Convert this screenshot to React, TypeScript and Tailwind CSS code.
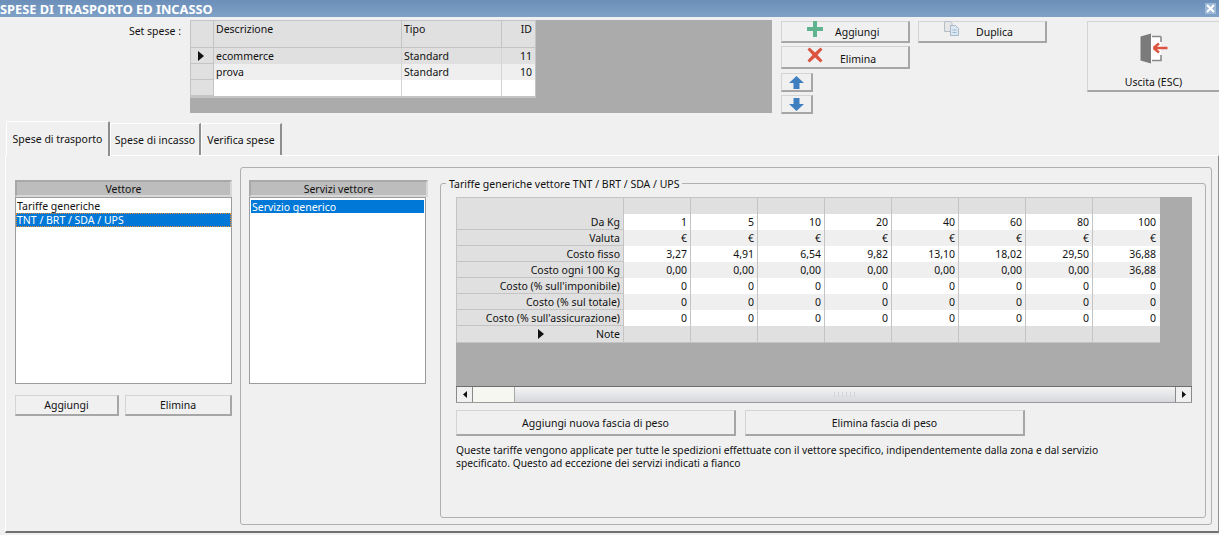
const BTN =
  "flex items-center justify-center border border-[#d4d4d4] border-r-2 border-b-2 border-r-[#a6a6a6] border-b-[#a6a6a6] bg-[#f0f0f0]";

const WEIGHTS = ["1", "5", "10", "20", "40", "60", "80", "100"];
const RATES: { label: string; values: string[] }[] = [
  { label: "Da Kg", values: WEIGHTS },
  { label: "Valuta", values: WEIGHTS.map(() => "€") },
  { label: "Costo fisso", values: ["3,27", "4,91", "6,54", "9,82", "13,10", "18,02", "29,50", "36,88"] },
  { label: "Costo ogni 100 Kg", values: ["0,00", "0,00", "0,00", "0,00", "0,00", "0,00", "0,00", "36,88"] },
  { label: "Costo (% sull'imponibile)", values: WEIGHTS.map(() => "0") },
  { label: "Costo (% sul totale)", values: WEIGHTS.map(() => "0") },
  { label: "Costo (% sull'assicurazione)", values: WEIGHTS.map(() => "0") },
];

function RowMarker() {
  return (
    <svg width="6" height="10" viewBox="0 0 6 10">
      <path d="M0 0 L6 5 L0 10 Z" fill="#111" />
    </svg>
  );
}

function SetGrid() {
  const rows = [
    { d: "ecommerce", t: "Standard", id: "11", bg: "bg-[#e0e0e0]", marker: true },
    { d: "prova", t: "Standard", id: "10", bg: "bg-[#efefef]", marker: false },
    { d: "", t: "", id: "", bg: "bg-white", marker: false },
  ];
  return (
    <div className="ml-[9px] mt-[3px] h-[93px] w-[582px] bg-[#ababab]">
      <div className="w-[346px] border border-[#c4c4c4] border-b-2">
        <div className="flex h-[27px] border-b border-[#c4c4c4] bg-[#e0e0e0]">
          <div className="w-[23px] border-r border-[#c4c4c4]" />
          <div className="w-[188px] border-r border-[#c4c4c4] pl-[2px] leading-[16px]">Descrizione</div>
          <div className="w-[100px] border-r border-[#c4c4c4] pl-[2px] leading-[16px]">Tipo</div>
          <div className="flex-1 pr-[3px] text-right leading-[16px]">ID</div>
        </div>
        {rows.map((r) => (
          <div key={r.id || "new"} className={`flex h-[16px] leading-[16px] ${r.bg}`}>
            <div className="flex w-[23px] items-center justify-center border-r border-b border-[#c4c4c4] bg-[#e0e0e0] pr-[2px]">
              {r.marker && <RowMarker />}
            </div>
            <div className="w-[188px] border-r border-[#d4d4d4] pl-[2px]">{r.d}</div>
            <div className="w-[100px] border-r border-[#d4d4d4] pl-[2px]">{r.t}</div>
            <div className="flex-1 pr-[3px] text-right">{r.id}</div>
          </div>
        ))}
      </div>
    </div>
  );
}

function PlusIcon() {
  return (
    <svg width="16" height="16" viewBox="0 0 16 16">
      <path d="M6 0 H10 V6 H16 V10 H10 V16 H6 V10 H0 V6 H6 Z" fill="#5fb48f" />
    </svg>
  );
}

function CrossIcon() {
  return (
    <svg width="16" height="16" viewBox="0 0 16 16">
      <path d="M2.5 0.5 L8 5.5 L13.5 0.5 L15.5 2.5 L10.5 8 L15.5 13.5 L13.5 15.5 L8 10.5 L2.5 15.5 L0.5 13.5 L5.5 8 L0.5 2.5 Z" fill="#dc5440" />
    </svg>
  );
}

function CopyIcon() {
  return (
    <svg width="15" height="15" viewBox="0 0 15 15">
      <path d="M0.5 0.5 H6 L8 2.5 V10.5 H0.5 Z" fill="#e6e6e6" stroke="#b4bcc6" />
      <path d="M6.5 4.5 H11.5 L14.5 7.5 V14.5 H6.5 Z" fill="#dbe7f3" stroke="#a9b8c8" />
      <path d="M8.5 9 H12.5 M8.5 11.5 H12.5" stroke="#9db9d6" />
    </svg>
  );
}

function ExitIcon() {
  return (
    <svg width="28" height="31" viewBox="0 0 28 31">
      <rect x="11" y="3" width="10" height="25" fill="#ffffff" />
      <path d="M21 3.5 H12 M21 3.5 V9 M21 22 V27.5 H12" fill="none" stroke="#8a8a8a" strokeWidth="1.6" />
      <path d="M0.5 3.5 L11 0.5 V30.5 L0.5 27.5 Z" fill="#7b7b7b" />
      <path d="M27.5 15 H14 M13.5 15 L19 10.5 M13.5 15 L19 19.5" fill="none" stroke="#dc5440" strokeWidth="2.4" />
    </svg>
  );
}

function ArrowIcon({ down }: { down?: boolean }) {
  return (
    <svg width="15" height="13" viewBox="0 0 15 13">
      <path
        d={down ? "M4.5 0 H10.5 V6 H15 L7.5 13 L0 6 H4.5 Z" : "M7.5 0 L15 7 H10.5 V13 H4.5 V7 H0 Z"}
        fill="#3f7fbf"
      />
    </svg>
  );
}

function TopActions() {
  return (
    <>
      <div className="ml-[9px] mt-[4px] flex w-[129px] flex-col">
        <div className={`${BTN} h-[22px] justify-start pl-[25px]`}>
          <span className="-mt-[6px] mr-[12px]"><PlusIcon /></span>
          <span>Aggiungi</span>
        </div>
        <div className={`${BTN} mt-[3px] h-[23px] justify-start pl-[25px]`}>
          <span className="-mt-[5px] mr-[17px]"><CrossIcon /></span>
          <span className="pt-[3px]">Elimina</span>
        </div>
        <div className={`${BTN} mt-[4px] h-[19px] w-[32px]`}><ArrowIcon /></div>
        <div className={`${BTN} mt-[3px] h-[19px] w-[32px]`}><ArrowIcon down /></div>
      </div>
      <div className={`${BTN} ml-[8px] mt-[4px] h-[22px] w-[129px] justify-start pl-[25px]`}>
        <span className="-mt-[7px] mr-[17px]"><CopyIcon /></span>
        <span>Duplica</span>
      </div>
      <div className="ml-[40px] mt-[4px] flex h-[71px] w-[132px] flex-col items-center border-t border-l border-[#d4d4d4] border-b-2 border-b-[#a6a6a6] pt-[11px]">
        <ExitIcon />
        <div className="mt-[11px]">Uscita (ESC)</div>
      </div>
    </>
  );
}

function Tabs() {
  return (
    <div className="flex h-[34px] items-end pl-[6px]">
      <div className="relative z-10 -mb-px flex h-[35px] w-[104px] items-center justify-center rounded-t-[2px] border-t border-l border-white border-r-2 border-r-[#8e8e8e] bg-[#f0f0f0]">
        Spese di trasporto
      </div>
      <div className="flex h-[32px] w-[91px] items-center justify-center border-r-2 border-r-[#8e8e8e] border-t border-t-white border-l border-l-white">
        Spese di incasso
      </div>
      <div className="flex h-[32px] w-[81px] items-center justify-center border-r-2 border-r-[#8e8e8e] border-t border-t-white border-l border-l-white">
        Verifica spese
      </div>
    </div>
  );
}

function ListPanel({ title, width, children }: { title: string; width: string; children: React.ReactNode }) {
  return (
    <div className={width}>
      <div className="flex h-[17px] items-center justify-center border-2 border-[#a8a8a8] border-b-[#d8d8d8] border-r-[#d8d8d8] bg-[#bdbdbd]">
        {title}
      </div>
      {children}
    </div>
  );
}

function Rates() {
  const cols = [0, 1, 2, 3, 4, 5, 6, 7];
  return (
    <div className="h-[206px] w-[736px] bg-[#ababab]">
      <div className="w-[704px] border-t border-l border-[#c4c4c4]">
        <div className="flex h-[16px] bg-[#e0e0e0]">
          <div className="w-[166px]" />
          {cols.map((c) => (
            <div key={c} className="w-[67px] border-l border-[#c4c4c4]" />
          ))}
        </div>
        {RATES.map((row, i) => (
          <div key={row.label} className={`flex h-[16px] leading-[16px] ${i % 2 ? "bg-[#efefef]" : "bg-white"}`}>
            <div className="w-[166px] border-b border-[#c4c4c4] bg-[#e0e0e0] pr-[3px] text-right">{row.label}</div>
            {row.values.map((v, c) => (
              <div key={c} className="w-[67px] border-l border-[#c4c4c4] pr-[3px] text-right">{v}</div>
            ))}
          </div>
        ))}
        <div className="flex h-[17px] border-b border-[#c4c4c4] bg-[#e0e0e0] leading-[16px]">
          <div className="flex w-[166px] items-center pr-[3px]">
            <span className="ml-[81px]"><RowMarker /></span>
            <span className="ml-auto">Note</span>
          </div>
          {cols.map((c) => (
            <div key={c} className="w-[67px] border-l border-[#c4c4c4]" />
          ))}
        </div>
      </div>
      <div className="mt-[43px] flex h-[17px] items-center border-t border-[#6e6e6e] border-b border-b-[#9a9a9a] bg-gradient-to-b from-[#f4f4f4] to-[#d6d8dc]">
        <div className="flex h-full w-[17px] items-center justify-center border-x border-[#8a8a8a] bg-[#f0f0f0]">
          <svg width="4" height="7" viewBox="0 0 4 7"><path d="M4 0 L0 3.5 L4 7 Z" fill="#111" /></svg>
        </div>
        <div className="h-full w-[42px] border-r border-[#a8a8a8] bg-[#f7f7f2]" />
        <div className="flex flex-1 items-center justify-center">
          <svg width="23" height="5" viewBox="0 0 23 5">
            <path d="M0 1 H23 M0 4 H23" stroke="#b6b6b6" strokeDasharray="1 3" />
          </svg>
        </div>
        <div className="flex h-full w-[17px] items-center justify-center border-x border-[#8a8a8a] bg-[#f0f0f0]">
          <svg width="4" height="7" viewBox="0 0 4 7"><path d="M0 0 L4 3.5 L0 7 Z" fill="#111" /></svg>
        </div>
      </div>
    </div>
  );
}

export default function App() {
  return (
    <div className="h-[535px] w-[1219px] overflow-hidden bg-[#f0f0f0] font-['Noto_Sans','Liberation_Sans',sans-serif] text-[10.5px] leading-[14px] text-[#111]">
      <div className="flex h-[17px] items-center justify-between bg-gradient-to-b from-[#6b8fb9] to-[#7fa1c8] pr-[3px] text-[12.8px] font-bold text-white">
        <span>SPESE DI TRASPORTO ED INCASSO</span>
        <span className="flex h-[11px] w-[11px] items-center justify-center bg-[#9db8d6]">
          <svg width="9" height="9" viewBox="0 0 9 9">
            <path d="M1 1 L8 8 M8 1 L1 8" stroke="#fff" strokeWidth="2" />
          </svg>
        </span>
      </div>

      <div className="flex h-[104px]">
        <div className="w-[181px] pt-[7px] text-right">Set spese :</div>
        <SetGrid />
        <TopActions />
      </div>

      <Tabs />

      <div className="ml-[5px] flex h-[378px] border-t border-l border-white border-r border-r-[#8e8e8e] border-b-2 border-b-[#707070] pl-[9px] pt-[11px]">
        <ListPanel title="Vettore" width="mt-[13px] w-[217px]">
          <div className="h-[187px] border border-[#9c9c9c] bg-white pt-px">
            <div className="pl-px leading-[14px]">Tariffe generiche</div>
            <div className="h-[14px] border border-dotted border-[#f08a24] bg-[#0078d7] leading-[12px] text-white">
              TNT / BRT / SDA / UPS
            </div>
          </div>
          <div className="mt-[11px] flex justify-between">
            <div className={`${BTN} h-[21px] w-[104px]`}>Aggiungi</div>
            <div className={`${BTN} h-[21px] w-[107px]`}>Elimina</div>
          </div>
        </ListPanel>

        <div className="ml-[8px] flex h-[358px] w-[972px] rounded-[3px] border border-[#b0b0b0] pl-[8px] pt-[12px]">
          <ListPanel title="Servizi vettore" width="w-[179px]">
            <div className="h-[187px] w-[177px] border border-[#9c9c9c] bg-white p-px pt-[2px]">
              <div className="h-[13px] bg-[#0078d7] pl-px leading-[15px] text-white">Servizio generico</div>
            </div>
          </ListPanel>

          <div className="relative ml-[12px] mt-[3px] h-[335px] w-[766px] rounded-[3px] border border-[#b0b0b0] pl-[15px] pt-[13px]">
            <span className="absolute -top-[7px] left-[5px] bg-[#f0f0f0] px-[3px]">
              Tariffe generiche vettore TNT / BRT / SDA / UPS
            </span>
            <Rates />
            <div className="mt-[7px] flex gap-[9px]">
              <div className={`${BTN} h-[26px] w-[280px]`}>Aggiungi nuova fascia di peso</div>
              <div className={`${BTN} h-[26px] w-[280px]`}>Elimina fascia di peso</div>
            </div>
            <p className="mt-[8px] w-[680px] text-[10.25px] leading-[13px]">
              Queste tariffe vengono applicate per tutte le spedizioni effettuate con il vettore specifico, indipendentemente dalla zona e dal servizio specificato. Questo ad eccezione dei servizi indicati a fianco
            </p>
          </div>
        </div>
      </div>
    </div>
  );
}
